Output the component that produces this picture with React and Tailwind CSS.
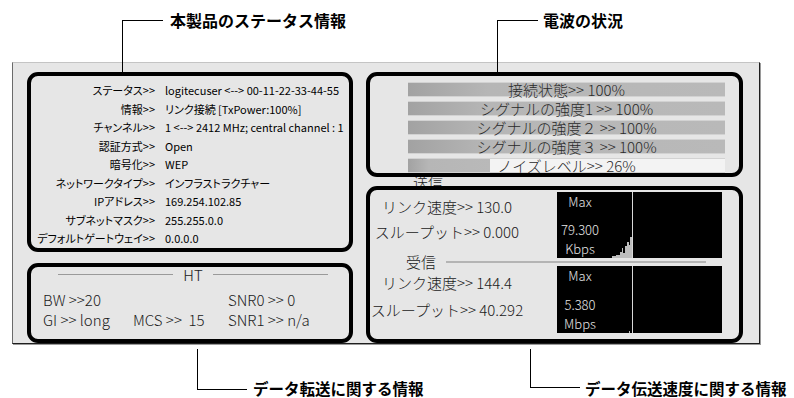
import React from 'react';

const statusRows = [
  ['ステータス>>', 'logitecuser <--> 00-11-22-33-44-55'],
  ['情報>>', 'リンク接続 [TxPower:100%]'],
  ['チャンネル>>', '1 <--> 2412 MHz; central channel : 1'],
  ['認証方式>>', 'Open'],
  ['暗号化>>', 'WEP'],
  ['ネットワークタイプ>>', 'インフラストラクチャー'],
  ['IPアドレス>>', '169.254.102.85'],
  ['サブネットマスク>>', '255.255.0.0'],
  ['デフォルトゲートウェイ>>', '0.0.0.0'],
];

const signalBars = [
  ['接続状態>> 100%', 100],
  ['シグナルの強度1 >> 100%', 100],
  ['シグナルの強度２ >> 100%', 100],
  ['シグナルの強度３ >> 100%', 100],
  ['ノイズレベル>> 26%', 26],
];

const SignalBar = ({ label, pct }) => (
  <div className="relative h-[15px] bg-[#f3f3f3] border-y border-[#d2d2d2]">
    <div
      className="absolute inset-y-0 left-0 bg-[linear-gradient(to_right,#a2a2a2,#b6b6b6_25%,#b9b9b9)]"
      style={{ width: `${pct}%` }}
    />
    <div className="relative text-center text-[15px] leading-[13px] font-light text-[#2a2a2a] whitespace-nowrap">{label}</div>
  </div>
);

const Graph = ({ value, unit, bars }) => (
  <div className="flex w-[165px] h-full bg-black">
    <div className="relative w-[76px] border-r border-[#d8d8d8]">
      <div className="flex flex-col justify-between h-full w-[46px] text-center text-[13px] leading-[19px] font-light text-[#e6e6e6]">
        <div>Max</div>
        <div>
          <div>{value}</div>
          <div>{unit}</div>
        </div>
      </div>
      {bars && (
        <svg className="absolute right-0 bottom-0" width="20" height="24" viewBox="0 0 20 24">
          <path
            d="M0 24 V22 H4 V21 H8 V18 H10 V14 H11 V19 H13 V12 H15 V8 H17 V11 H18 V3 H20 V24 Z"
            fill="#bdbdbd"
          />
        </svg>
      )}
      {!bars && <div className="absolute right-[2px] bottom-0 w-px h-[2px] bg-[#bdbdbd]" />}
    </div>
    <div className="flex-1" />
  </div>
);

const App = () => {
  return (
    <div className="relative w-[794px] h-[398px] bg-white overflow-hidden font-['Noto_Sans_CJK_JP',sans-serif] text-black">
      {/* callout lines */}
      <div className="absolute left-[122px] top-[20px] w-[41px] h-[52px] border-l border-t border-black z-10" />
      <div className="absolute left-[497px] top-[20px] w-[41px] h-[52px] border-l border-t border-black z-10" />
      <div className="absolute left-[197px] top-[349px] w-[50px] h-[41px] border-l border-b border-black" />
      <div className="absolute left-[530px] top-[349px] w-[50px] h-[39px] border-l border-b border-black" />

      {/* top titles */}
      <div className="flex h-[62px] pl-[170px] pt-[10px] text-[16px] leading-[20px] font-semibold">
        <div className="w-[373px]">本製品のステータス情報</div>
        <div>電波の状況</div>
      </div>

      {/* main panel */}
      <div className="relative isolate ml-[12px] w-[748px] h-[282px] bg-[#e6e6e6] border-l border-l-[#6a6a6a] border-t border-t-[#c4c4c4] border-r border-r-[#1e1e1e] border-b border-b-[#1e1e1e] shadow-[1px_1px_0_#9a9a9a] flex gap-[13px] pl-[14px] pt-[9px]">
        {/* left column */}
        <div className="flex flex-col gap-[11px] w-[326px]">
          <div className="h-[180px] border-4 border-black rounded-[11px] pt-[5px] text-[11px] leading-[18.5px] [font-feature-settings:'palt']">
            {statusRows.map(([label, value]) => (
              <div key={label} className="flex">
                <div className="w-[124px] text-right whitespace-nowrap">{label}</div>
                <div className="pl-[10px] whitespace-nowrap">{value}</div>
              </div>
            ))}
          </div>

          <div className="h-[86px] border-4 border-black rounded-[11px] text-[15px] font-light text-[#1a1a1a]">
            <div className="flex items-center gap-[10px] ml-[27px] mr-[21px] h-[16px] leading-[16px]">
              <div className="flex-1 h-px bg-[#9a9a9a]" />
              <div>HT</div>
              <div className="flex-1 h-px bg-[#9a9a9a]" />
            </div>
            <div className="grid grid-cols-[90px_95px_1fr] pl-[12px] mt-[7px] leading-[20px]">
              <div>BW &gt;&gt;20</div>
              <div />
              <div>SNR0 &gt;&gt; 0</div>
              <div>GI &gt;&gt; long</div>
              <div>MCS &gt;&gt;&nbsp; 15</div>
              <div>SNR1 &gt;&gt; n/a</div>
            </div>
          </div>
        </div>

        {/* right column */}
        <div className="flex flex-col gap-[9px] w-[377px]">
          <div className="h-[106px] border-4 border-black rounded-[11px] pt-[6px] pl-[38px]">
            <div className="flex flex-col gap-[4px] w-[317px]">
              {signalBars.map(([label, pct]) => (
                <SignalBar key={label} label={label} pct={pct} />
              ))}
            </div>
          </div>

          <div className="relative h-[162px] border-4 border-black rounded-[11px] pt-[2px] text-[15px] font-light text-[#1a1a1a]">
            <div className="absolute left-[43px] top-[-16px] -z-10 text-[15px] leading-[16px]">送信</div>

            <div className="flex h-[66px]">
              <div className="w-[154px] text-center leading-[25px] pt-[2px] whitespace-nowrap">
                <div>リンク速度&gt;&gt; 130.0</div>
                <div>スループット&gt;&gt; 0.000</div>
              </div>
              <div className="ml-[33px] h-full">
                <Graph value="79.300" unit="Kbps" bars />
              </div>
            </div>

            <div className="flex items-center h-[8px] pl-[36px] pr-[33px]">
              <div className="text-[15px] leading-[8px]">受信</div>
              <div className="flex-1 ml-[10px] border-t-2 border-[#b4b4b4]" />
            </div>

            <div className="flex h-[67px]">
              <div className="w-[154px] text-center leading-[27px] pt-[3px] whitespace-nowrap">
                <div>リンク速度&gt;&gt; 144.4</div>
                <div>スループット&gt;&gt; 40.292</div>
              </div>
              <div className="ml-[33px] h-full">
                <Graph value="5.380" unit="Mbps" />
              </div>
            </div>
          </div>
        </div>
      </div>

      {/* bottom titles */}
      <div className="flex pl-[253px] pt-[34px] text-[15.5px] leading-[20px] font-semibold">
        <div className="w-[332px]">データ転送に関する情報</div>
        <div>データ伝送速度に関する情報</div>
      </div>
    </div>
  );
};

export default App;
